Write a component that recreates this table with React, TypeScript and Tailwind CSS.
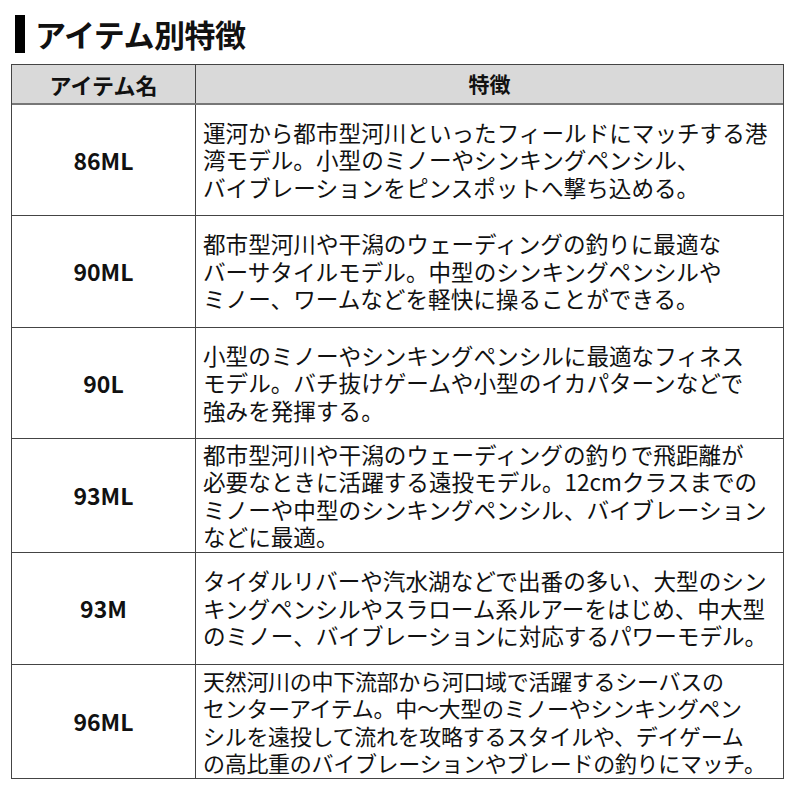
import React from "react";

const rows: { label: string; lines: string[]; h: string; condensed?: boolean }[] = [
  {
    label: "86ML",
    h: "h-[110px]",
    lines: [
      "運河から都市型河川といったフィールドにマッチする港",
      "湾モデル。小型のミノーやシンキングペンシル、",
      "バイブレーションをピンスポットへ撃ち込める。",
    ],
  },
  {
    label: "90ML",
    h: "h-[112px]",
    lines: [
      "都市型河川や干潟のウェーディングの釣りに最適な",
      "バーサタイルモデル。中型のシンキングペンシルや",
      "ミノー、ワームなどを軽快に操ることができる。",
    ],
  },
  {
    label: "90L",
    h: "h-[111px]",
    lines: [
      "小型のミノーやシンキングペンシルに最適なフィネス",
      "モデル。バチ抜けゲームや小型のイカパターンなどで",
      "強みを発揮する。",
    ],
  },
  {
    label: "93ML",
    h: "h-[114px]",
    lines: [
      "都市型河川や干潟のウェーディングの釣りで飛距離が",
      "必要なときに活躍する遠投モデル。12cmクラスまでの",
      "ミノーや中型のシンキングペンシル、バイブレーション",
      "などに最適。",
    ],
  },
  {
    label: "93M",
    h: "h-[112px]",
    lines: [
      "タイダルリバーや汽水湖などで出番の多い、大型のシン",
      "キングペンシルやスラローム系ルアーをはじめ、中大型",
      "のミノー、バイブレーションに対応するパワーモデル。",
    ],
  },
  {
    label: "96ML",
    h: "h-[114px]",
    condensed: true,
    lines: [
      "天然河川の中下流部から河口域で活躍するシーバスの",
      "センターアイテム。中～大型のミノーやシンキングペン",
      "シルを遠投して流れを攻略するスタイルや、デイゲーム",
      "の高比重のバイブレーションやブレードの釣りにマッチ。",
    ],
  },
];

export default function App() {
  return (
    <div
      className="w-[800px] h-[800px] bg-white text-[#111]"
      style={{ fontFamily: '"Noto Sans CJK JP", "Noto Sans", sans-serif' }}
    >
      <div className="flex items-center pt-[15px] pl-[15px] gap-[10px]">
        <div className="w-[10px] h-[38px] bg-black" />
        <div className="text-[31px] leading-[38px] font-bold tracking-[-0.5px]">アイテム別特徴</div>
      </div>
      <div className="ml-[11px] mt-[11px] w-[773px] border border-[#444]">
        <div className="flex h-[40px] bg-[#d9d9d9] border-b-2 border-[#777]">
          <div className="w-[184px] border-r border-[#444] flex items-center justify-center text-[22px] font-bold">
            アイテム名
          </div>
          <div className="flex-1 flex items-center justify-center text-[21px] font-bold">特徴</div>
        </div>
        {rows.map((r, i) => (
          <div key={r.label} className={`flex ${r.h} ${i > 0 ? "border-t border-[#444]" : ""}`}>
            <div className="w-[184px] border-r border-[#444] flex items-center justify-center text-[23px] font-bold">
              {r.label}
            </div>
            <div
              className={`flex-1 flex flex-col justify-center pl-[7px] leading-[27.5px] whitespace-nowrap ${
                r.condensed ? "text-[22px] tracking-[-0.3px]" : "text-[22.6px]"
              }`}
            >
              {r.lines.map((l) => (
                <div key={l}>{l}</div>
              ))}
            </div>
          </div>
        ))}
      </div>
    </div>
  );
}
